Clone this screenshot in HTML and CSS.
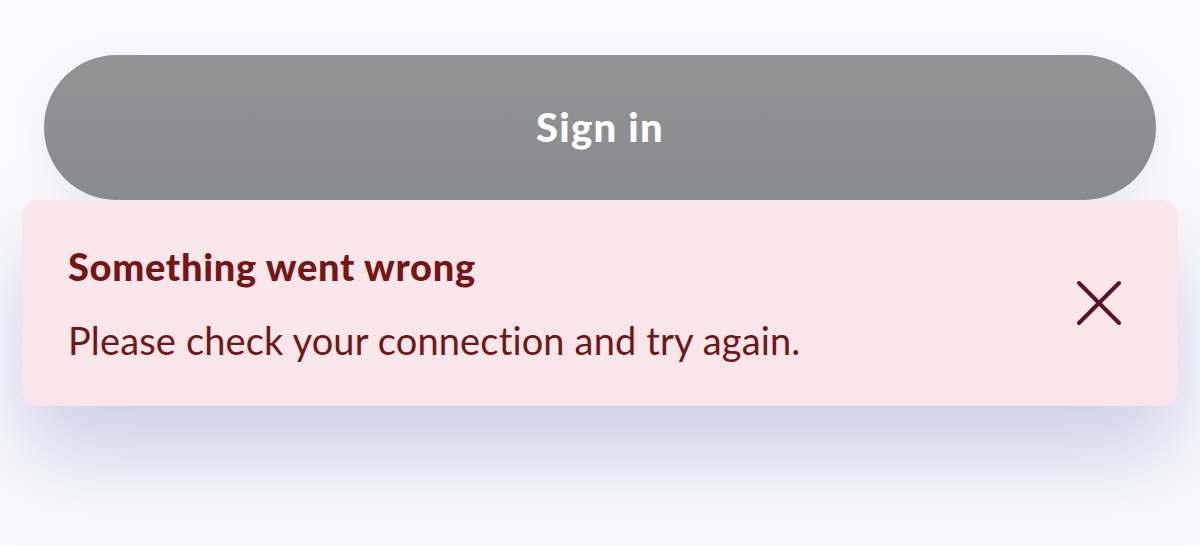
FILE: index.html
```html
<!DOCTYPE html>
<html lang="en">
<head>
    <meta charset="UTF-8">
    <meta name="viewport" content="width=device-width, initial-scale=1.0">
    <title>Sign in</title>
    <link rel="stylesheet" href="styles.css">
</head>
<body>
    <div class="page">
        <button class="signin-btn" disabled>Sign in</button>
        <div class="toast">
            <div class="toast-text">
                <h3>Something went wrong</h3>
                <p>Please check your connection and try again.</p>
            </div>
            <button class="toast-close" aria-label="Close">
                <svg width="46" height="46" viewBox="0 0 46 46">
                    <path d="M3 3 L43 43 M43 3 L3 43" stroke="#5a1228" stroke-width="4" stroke-linecap="round" fill="none"/>
                </svg>
            </button>
        </div>
    </div>
</body>
</html>
```

FILE: styles.css
```css
body {
    margin: 0;
    background-color: #fbfbfd;
    font-family: Lato, "Open Sans", sans-serif;
}
.page {
    padding-top: 55px;
    min-height: 546px;
    box-sizing: border-box;
}
.signin-btn {
    display: block;
    width: calc(100% - 88px);
    height: 145px;
    margin: 0 44px;
    border: none;
    border-radius: 72px;
    background: linear-gradient(#949494, #8a8a91);
    color: #ffffff;
    font-family: Lato, sans-serif;
    font-size: 40px;
    font-weight: 900;
    letter-spacing: 1.3px;
    padding-bottom: 2px;
    box-shadow: 0 10px 40px rgba(170, 170, 215, 0.2);
}
.toast {
    display: flex;
    align-items: center;
    justify-content: space-between;
    margin: 0 22px;
    height: 206px;
    padding: 0 56px 0 46px;
    background: #f8e6ea;
    border-radius: 16px;
    box-shadow: 0 50px 90px rgba(130, 130, 200, 0.38);
}
.toast-text h3 {
    margin: 0;
    color: #761515;
    font-size: 38px;
    line-height: 46px;
    font-weight: 900;
    letter-spacing: 0.7px;
}
.toast-text p {
    margin: 28px 0 0;
    color: #6e1818;
    font-size: 38px;
    line-height: 46px;
    letter-spacing: 0.15px;
}
.toast-close {
    background: none;
    border: none;
    padding: 0;
    display: flex;
}
```
